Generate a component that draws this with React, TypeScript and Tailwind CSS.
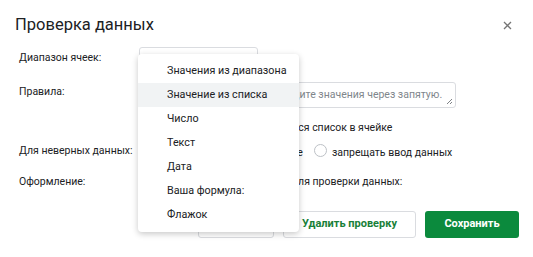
const menuItems = [
  "Значения из диапазона",
  "Значение из списка",
  "Число",
  "Текст",
  "Дата",
  "Ваша формула:",
  "Флажок",
];

function Checkbox() {
  return <span className="inline-block w-[12px] h-[12px] rounded-[2px] border border-[#5f6368] shrink-0" />;
}

function Radio() {
  return <span className="inline-block w-[13px] h-[13px] rounded-full border border-[#bdc1c6] shrink-0" />;
}

export default function App() {
  return (
    <div className="relative w-[533px] h-[257px] bg-white text-[#202124] overflow-hidden font-['Roboto',sans-serif]">
      <div className="flex items-center justify-between pl-[15px] pr-[21px] pt-[13px] h-[36px]">
        <h1 className="text-[16.5px] leading-[24px] text-[#202124]">Проверка данных</h1>
        <svg width="9" height="9" viewBox="0 0 9 9" className="mt-[1px]">
          <path d="M1 1L8 8M8 1L1 8" stroke="#757575" strokeWidth="1.3" />
        </svg>
      </div>

      <div className="grid grid-cols-[120px_1fr] pl-[19px] text-[10.5px] leading-[14px]">
        <div className="pt-[15px]">Диапазон ячеек:</div>
        <div className="pt-[11px]">
          <div className="w-[119px] h-[26px] rounded-[3px] border border-[#dadce0]" />
        </div>

        <div className="pt-[12px]">Правила:</div>
        <div className="flex gap-[9px] pt-[9px]">
          <div className="w-[123px] h-[26px] rounded-[3px] border border-[#dadce0] pl-[8px] pt-[5px]">
            Значение из списка
          </div>
          <div className="relative w-[185px] h-[26px] rounded-[3px] border border-[#dadce0] pl-[3px] pt-[5px] text-[#80868b]">
            Введите значения через запятую.
            <svg width="7" height="7" viewBox="0 0 7 7" className="absolute right-[2px] bottom-[2px]">
              <path d="M1 6L6 1M4 6L6 4" stroke="#5f6368" strokeWidth="0.8" />
            </svg>
          </div>
        </div>

        <div />
        <div className="flex items-center gap-[6px] pt-[13px]">
          <Checkbox />
          <span>Показывать раскрывающийся список в ячейке</span>
        </div>

        <div className="pt-[9px]">Для неверных данных:</div>
        <div className="flex items-center pt-[9px]">
          <Radio />
          <span className="ml-[5px]">показывать предупреждение</span>
          <span className="ml-[11px]"><Radio /></span>
          <span className="ml-[5px]">запрещать ввод данных</span>
        </div>

        <div className="pt-[14px]">Оформление:</div>
        <div className="flex items-center gap-[6px] pt-[14px]">
          <Checkbox />
          <span className="ml-[29px]">Показывать справку для проверки данных:</span>
        </div>
      </div>

      <div className="flex justify-end gap-[9px] pr-[14px] pt-[22px] text-[11px] font-bold">
        <button className="w-[76px] h-[27px] rounded-[3px] border border-[#dadce0] text-[#3c4043]">Отмена</button>
        <button className="w-[133px] h-[27px] rounded-[3px] border border-[#dadce0] text-[#188038]">Удалить проверку</button>
        <button className="w-[94px] h-[27px] rounded-[3px] bg-[#0b8a3d] text-white">Сохранить</button>
      </div>

      <div className="absolute left-[138px] top-[54px] w-[161px] py-[5px] bg-white rounded-[4px] shadow-[0_2px_6px_rgba(0,0,0,0.22)] text-[10.75px] text-[#202124]">
        {menuItems.map((item, i) => (
          <div
            key={item}
            className={`h-[24px] flex items-center pl-[29px] ${i === 1 ? "bg-[#f1f3f4]" : ""}`}
          >
            {item}
          </div>
        ))}
      </div>
    </div>
  );
}
